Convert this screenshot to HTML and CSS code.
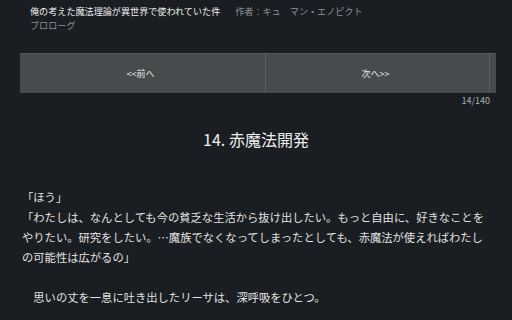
FILE: index.html
```html
<!DOCTYPE html>
<html lang="ja">
<head>
<meta charset="utf-8">
<link rel="stylesheet" href="styles.css">
</head>
<body>
<header class="head">
  <div class="head-line"><span class="novel">俺の考えた魔法理論が異世界で使われていた件</span><span class="author">作者：キュ　マン・エノピクト</span></div>
  <div class="chapter-group">プロローグ</div>
</header>
<nav class="pager">
  <a class="pager-btn">&lt;&lt;前へ</a>
  <a class="pager-btn">次へ&gt;&gt;</a>
  <span class="pager-end"></span>
</nav>
<div class="count">14/140</div>
<h1 class="title">14. 赤魔法開発</h1>
<div class="text">
  <p>「ほう」</p>
  <p>「わたしは、なんとしても今の貧乏な生活から抜け出したい。もっと自由に、好きなことをやりたい。研究をしたい。…魔族でなくなってしまったとしても、赤魔法が使えればわたしの可能性は広がるの」</p>
  <p class="blank">&nbsp;</p>
  <p>　思いの丈を一息に吐き出したリーサは、深呼吸をひとつ。</p>
</div>
</body>
</html>
```
FILE: styles.css
```css
html, body {
  margin: 0;
  padding: 0;
  background: #1a1d21;
  height: 100%;
  overflow: hidden;
}
body {
  font-family: "Noto Sans CJK JP", "Noto Sans", sans-serif;
  color: #e4e4e4;
}
.head {
  padding: 4px 0 0 30px;
  font-size: 9.1px;
  line-height: 14px;
}
.head-line {
  display: flex;
  gap: 15px;
  white-space: nowrap;
}
.novel {
  color: #f0f0f0;
}
.author {
  color: #8b9199;
}
.chapter-group {
  color: #8b9199;
}
.pager {
  margin: 21px 16px 0 20px;
  display: grid;
  grid-template-columns: 245px 224px 1fr;
  height: 40px;
  background: #474b4e;
  border-top: 1px solid #55595c;
  box-sizing: border-box;
}
.pager-btn {
  display: flex;
  align-items: center;
  justify-content: center;
  padding-right: 4px;
  font-size: 9px;
  color: #e6e6e6;
}
.pager-btn + .pager-btn {
  border-left: 1px solid #5b6064;
}
.pager-end {
  border-left: 1px solid #5b6064;
}
.count {
  margin: 1px 22px 0 0;
  text-align: right;
  font-size: 9px;
  line-height: 14px;
  color: #a9afb5;
}
.title {
  margin: 21px 0 0;
  text-align: center;
  font-size: 16px;
  font-weight: 400;
  line-height: 20px;
  color: #eeeeee;
}
.text {
  margin: 38px 22px 0 22px;
  font-size: 11.3px;
  line-height: 20px;
  color: #e2e2e2;
}
.text p {
  margin: 0;
}
```
